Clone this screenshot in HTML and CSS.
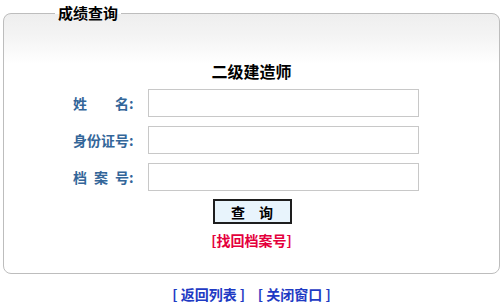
FILE: index.html
```html
<!DOCTYPE html>
<html lang="zh-CN">
<head>
<meta charset="utf-8">
<title>成绩查询</title>
<link rel="stylesheet" href="styles.css">
</head>
<body>
<fieldset class="panel">
  <legend class="panel-title">成绩查询</legend>
  <h2 class="exam-name">二级建造师</h2>
  <form class="query-form">
    <div class="field">
      <label class="field-label">姓　　名:</label>
      <input class="field-input" type="text">
    </div>
    <div class="field">
      <label class="field-label">身份证号:</label>
      <input class="field-input" type="text">
    </div>
    <div class="field">
      <label class="field-label">档&ensp;案&ensp;号:</label>
      <input class="field-input" type="text">
    </div>
    <div class="actions">
      <button class="submit-btn" type="button">查　询</button>
    </div>
    <div class="recover">
      <a class="recover-link" href="#">[找回档案号]</a>
    </div>
  </form>
</fieldset>
<div class="footer-links">
  <a class="footer-link" href="#">[ 返回列表 ]</a>&nbsp;&nbsp;&nbsp;&nbsp;<a class="footer-link" href="#">[ 关闭窗口 ]</a>
</div>
</body>
</html>
```
FILE: styles.css
```css
html, body {
  margin: 0;
  padding: 0;
  background: #ffffff;
}
body {
  font-family: "Noto Sans CJK SC", "DejaVu Sans", sans-serif;
  font-weight: bold;
  font-size: 14px;
  line-height: 16px;
  color: #000;
}
.panel {
  margin: 5px 3px 0 3px;
  padding: 0 0 25px 0;
  border: 1px solid #bdbdbd;
  border-radius: 8px;
  background: linear-gradient(to bottom, #eeeeee 0, #f4f4f4 22px, #ffffff 50px);
  min-width: 0;
}
.panel-title {
  margin-left: 51px;
  padding: 0 3px;
  font-size: 15px;
  line-height: 16px;
  color: #000;
}
.exam-name {
  margin: 40px 0 0 0;
  font-size: 16px;
  line-height: 20px;
  text-align: center;
  font-weight: bold;
}
.query-form {
  margin: 8px 0 0 0;
  display: flex;
  flex-direction: column;
}
.field {
  display: grid;
  grid-template-columns: 75px 271px;
  align-items: center;
  height: 28px;
  margin-left: 69px;
  margin-bottom: 9px;
}
.field:nth-of-type(3) {
  margin-bottom: 8px;
}
.field-label {
  color: #336699;
  font-size: 14px;
  white-space: nowrap;
}
.field-input {
  box-sizing: border-box;
  width: 271px;
  height: 28px;
  margin: 0;
  padding: 0 4px;
  border: 1px solid #c8c8c8;
  background: #fff;
}
.actions {
  display: flex;
  justify-content: center;
  padding-left: 1px;
}
.submit-btn {
  box-sizing: border-box;
  width: 79px;
  height: 25px;
  margin: 0;
  padding: 0;
  border: 2px solid #1e1e1e;
  background: #e8f4fc;
  font-family: "Noto Sans CJK SC", sans-serif;
  font-weight: bold;
  font-size: 14px;
  line-height: 18px;
  color: #000;
}
.recover {
  margin-top: 8px;
  text-align: center;
}
.recover-link {
  color: #e4003c;
  text-decoration: none;
  font-size: 14px;
}
.footer-links {
  margin-top: 12px;
  text-align: center;
  font-size: 14px;
  line-height: 16px;
}
.footer-link {
  color: #1f3bc4;
  text-decoration: none;
}
```
